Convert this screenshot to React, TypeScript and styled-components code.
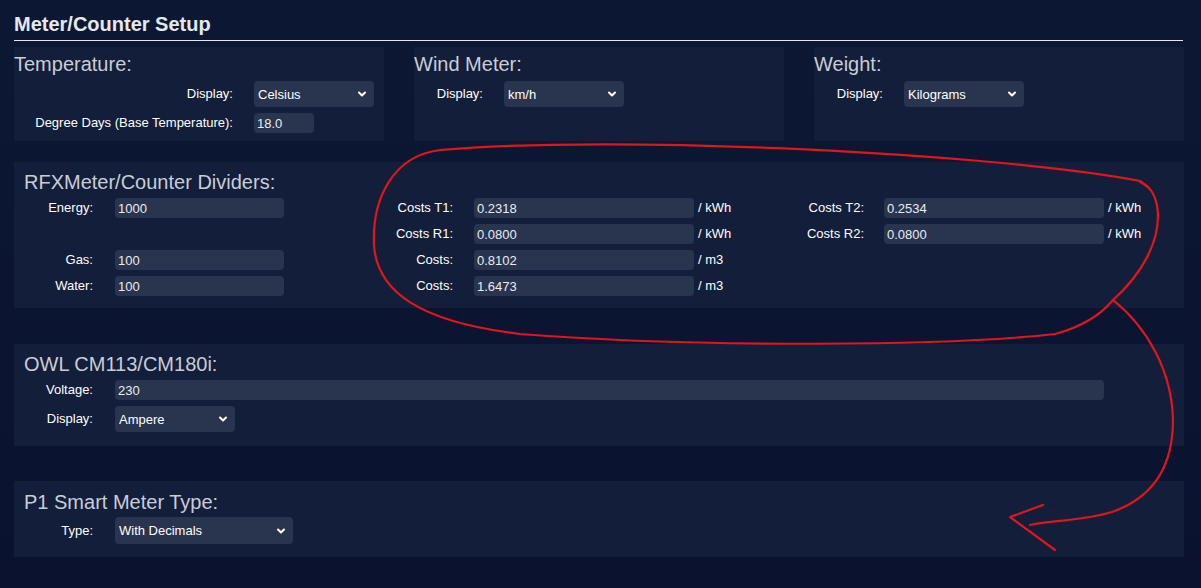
import React, {FC} from 'react';
import styled, {createGlobalStyle} from "styled-components";
import {ChevronDown} from "lucide-react";

const GlobalStyle = createGlobalStyle`
  html, body {
    margin: 0;
    padding: 0;
  }
  body {
    background: linear-gradient(180deg, #0c1833 0%, #0a1230 100%);
    min-height: 588px;
    font-family: "Liberation Sans", Arial, sans-serif;
    color: #f4f5f8;
  }
`;

const Page = styled.div`
  position: relative;
  width: 1201px;
  height: 588px;
  overflow: hidden;
  padding: 0 17px 0 14px;
  box-sizing: border-box;
`;

const Heading = styled.h2`
  margin: 12px 1px 6px 0;
  padding-bottom: 4px;
  font-size: 20px;
  line-height: 24px;
  font-weight: bold;
  color: #e4e8ef;
  border-bottom: 1px solid #e4e8ef;
`;

const TopRow = styled.div`
  display: flex;
  gap: 30px;
`;

const Panel = styled.section<{ $pad: string; $mt?: number }>`
  background: #131e3a;
  padding: ${p => p.$pad};
  margin-top: ${p => p.$mt ?? 0}px;
  box-sizing: border-box;
  display: flex;
  flex-direction: column;
`;

const SmallPanel = styled(Panel)`
  width: 370px;
  height: 94px;
`;

const PanelTitle = styled.div<{ $mb: number }>`
  font-size: 20px;
  line-height: 24px;
  color: #c9cdd6;
  margin-bottom: ${p => p.$mb}px;
`;

const Rows = styled.div`
  display: flex;
  flex-direction: column;
  gap: 6px;
`;

const Columns = styled.div`
  display: flex;
  align-items: flex-start;
`;

const Field = styled.div<{ $label: number; $ctrl: number; $unit?: number }>`
  display: grid;
  grid-template-columns: ${p => p.$label}px ${p => p.$ctrl}px ${p => (p.$unit ? `${p.$unit}px` : 'auto')};
  align-items: center;
`;

const Label = styled.label<{ $gap?: number }>`
  text-align: right;
  padding-right: ${p => p.$gap ?? 21}px;
  font-size: 13px;
  line-height: 16px;
  color: #ffffff;
  white-space: nowrap;
`;

const Unit = styled.span`
  padding-left: 4px;
  font-size: 13px;
  line-height: 16px;
  margin-top: -1px;
  color: #ffffff;
  white-space: nowrap;
`;

const TextInput = styled.input`
  box-sizing: border-box;
  width: 100%;
  height: 20px;
  border: none;
  border-radius: 4px;
  background: #29344f;
  color: #e9ecf2;
  font-family: "Liberation Sans", Arial, sans-serif;
  font-size: 13px;
  padding: 0 3px;
  outline: none;
`;

const Spacer = styled.div`
  height: 20px;
`;

const SelectWrap = styled.div<{ $h?: number }>`
  position: relative;
  width: 100%;
  height: ${p => p.$h ?? 26}px;
`;

const Select = styled.select`
  appearance: none;
  box-sizing: border-box;
  width: 100%;
  height: 100%;
  border: none;
  border-radius: 4px;
  background: #29344f;
  color: #ffffff;
  font-family: "Liberation Sans", Arial, sans-serif;
  font-size: 13px;
  padding: 0 4px;
  outline: none;
`;

const Chevron = styled(ChevronDown)`
  position: absolute;
  right: 6px;
  top: 50%;
  margin-top: -6px;
  color: #ffffff;
  pointer-events: none;
`;

const Annotation = styled.svg`
  position: absolute;
  left: 0;
  top: 0;
  pointer-events: none;
`;

interface DropdownProps {
    value: string;
    options: string[];
    height?: number;
}

const Dropdown: FC<DropdownProps> = ({value, options, height}) => (
    <SelectWrap $h={height}>
        <Select defaultValue={value}>
            {options.map(o => <option key={o}>{o}</option>)}
        </Select>
        <Chevron size={12} strokeWidth={4}/>
    </SelectWrap>
);

interface CostRow {
    label: string;
    value: string;
    unit: string;
}

const middleCosts: CostRow[] = [
    {label: 'Costs T1:', value: '0.2318', unit: '/ kWh'},
    {label: 'Costs R1:', value: '0.0800', unit: '/ kWh'},
    {label: 'Costs:', value: '0.8102', unit: '/ m3'},
    {label: 'Costs:', value: '1.6473', unit: '/ m3'},
];

const rightCosts: CostRow[] = [
    {label: 'Costs T2:', value: '0.2534', unit: '/ kWh'},
    {label: 'Costs R2:', value: '0.0800', unit: '/ kWh'},
];

const App: FC = () => {
    return (
        <Page>
            <GlobalStyle/>
            <Heading>Meter/Counter Setup</Heading>

            <TopRow>
                <SmallPanel $pad="5px 0 0 0">
                    <PanelTitle $mb={5}>Temperature:</PanelTitle>
                    <Rows>
                        <Field $label={240} $ctrl={120}>
                            <Label>Display:</Label>
                            <Dropdown value="Celsius" options={['Celsius', 'Fahrenheit']}/>
                        </Field>
                        <Field $label={240} $ctrl={60}>
                            <Label>Degree Days (Base Temperature):</Label>
                            <TextInput defaultValue="18.0"/>
                        </Field>
                    </Rows>
                </SmallPanel>
                <SmallPanel $pad="5px 0 0 0">
                    <PanelTitle $mb={5}>Wind Meter:</PanelTitle>
                    <Field $label={90} $ctrl={120}>
                        <Label>Display:</Label>
                        <Dropdown value="km/h" options={['m/s', 'km/h', 'mph', 'Knots', 'Beaufort']}/>
                    </Field>
                </SmallPanel>
                <SmallPanel $pad="5px 0 0 0">
                    <PanelTitle $mb={5}>Weight:</PanelTitle>
                    <Field $label={90} $ctrl={120}>
                        <Label>Display:</Label>
                        <Dropdown value="Kilograms" options={['Kilograms', 'Pounds']}/>
                    </Field>
                </SmallPanel>
            </TopRow>

            <Panel $pad="8px 10px 12px 10px" $mt={21}>
                <PanelTitle $mb={4}>RFXMeter/Counter Dividers:</PanelTitle>
                <Columns>
                    <Rows>
                        <Field $label={91} $ctrl={169}>
                            <Label $gap={22}>Energy:</Label>
                            <TextInput defaultValue="1000"/>
                        </Field>
                        <Spacer/>
                        <Field $label={91} $ctrl={169}>
                            <Label $gap={22}>Gas:</Label>
                            <TextInput defaultValue="100"/>
                        </Field>
                        <Field $label={91} $ctrl={169}>
                            <Label $gap={22}>Water:</Label>
                            <TextInput defaultValue="100"/>
                        </Field>
                    </Rows>
                    <Rows>
                        {middleCosts.map((c, i) => (
                            <Field key={i} $label={190} $ctrl={220} $unit={64}>
                                <Label>{c.label}</Label>
                                <TextInput defaultValue={c.value}/>
                                <Unit>{c.unit}</Unit>
                            </Field>
                        ))}
                    </Rows>
                    <Rows>
                        {rightCosts.map((c, i) => (
                            <Field key={i} $label={126} $ctrl={220}>
                                <Label $gap={20}>{c.label}</Label>
                                <TextInput defaultValue={c.value}/>
                                <Unit>{c.unit}</Unit>
                            </Field>
                        ))}
                    </Rows>
                </Columns>
            </Panel>

            <Panel $pad="8px 10px 14px 10px" $mt={36}>
                <PanelTitle $mb={4}>OWL CM113/CM180i:</PanelTitle>
                <Rows>
                    <Field $label={91} $ctrl={989}>
                        <Label $gap={22}>Voltage:</Label>
                        <TextInput defaultValue="230"/>
                    </Field>
                    <Field $label={91} $ctrl={120}>
                        <Label $gap={22}>Display:</Label>
                        <Dropdown value="Ampere" options={['Ampere', 'Watt']}/>
                    </Field>
                </Rows>
            </Panel>

            <Panel $pad="9px 10px 13px 10px" $mt={35}>
                <PanelTitle $mb={3}>P1 Smart Meter Type:</PanelTitle>
                <Field $label={91} $ctrl={178}>
                    <Label $gap={22}>Type:</Label>
                    <Dropdown value="With Decimals" options={['With Decimals', 'Without Decimals']} height={27}/>
                </Field>
            </Panel>

            <Annotation width="1201" height="588" viewBox="0 0 1201 588" fill="none"
                        stroke="#e0151d" strokeWidth="2.2" strokeLinecap="round" strokeLinejoin="round">
                <path d="M1148 187 L1140 181 C1000 154, 620 134, 440 150 C392 156, 372 200, 374 245
                         C377 292, 420 322, 520 334 C700 348, 950 346, 1055 334 C1085 326, 1103 312, 1113 300"/>
                <path d="M1113 300 C1140 276, 1163 240, 1157 205 C1154 192, 1149 186, 1140 182"/>
                <path d="M1113 300 C1148 328, 1172 372, 1173 420 C1173 468, 1152 498, 1112 512
                         C1082 521, 1055 520, 1030 525"/>
                <path d="M1043 505 L1010 517 L1055 550"/>
            </Annotation>
        </Page>
    );
};

export default App;
